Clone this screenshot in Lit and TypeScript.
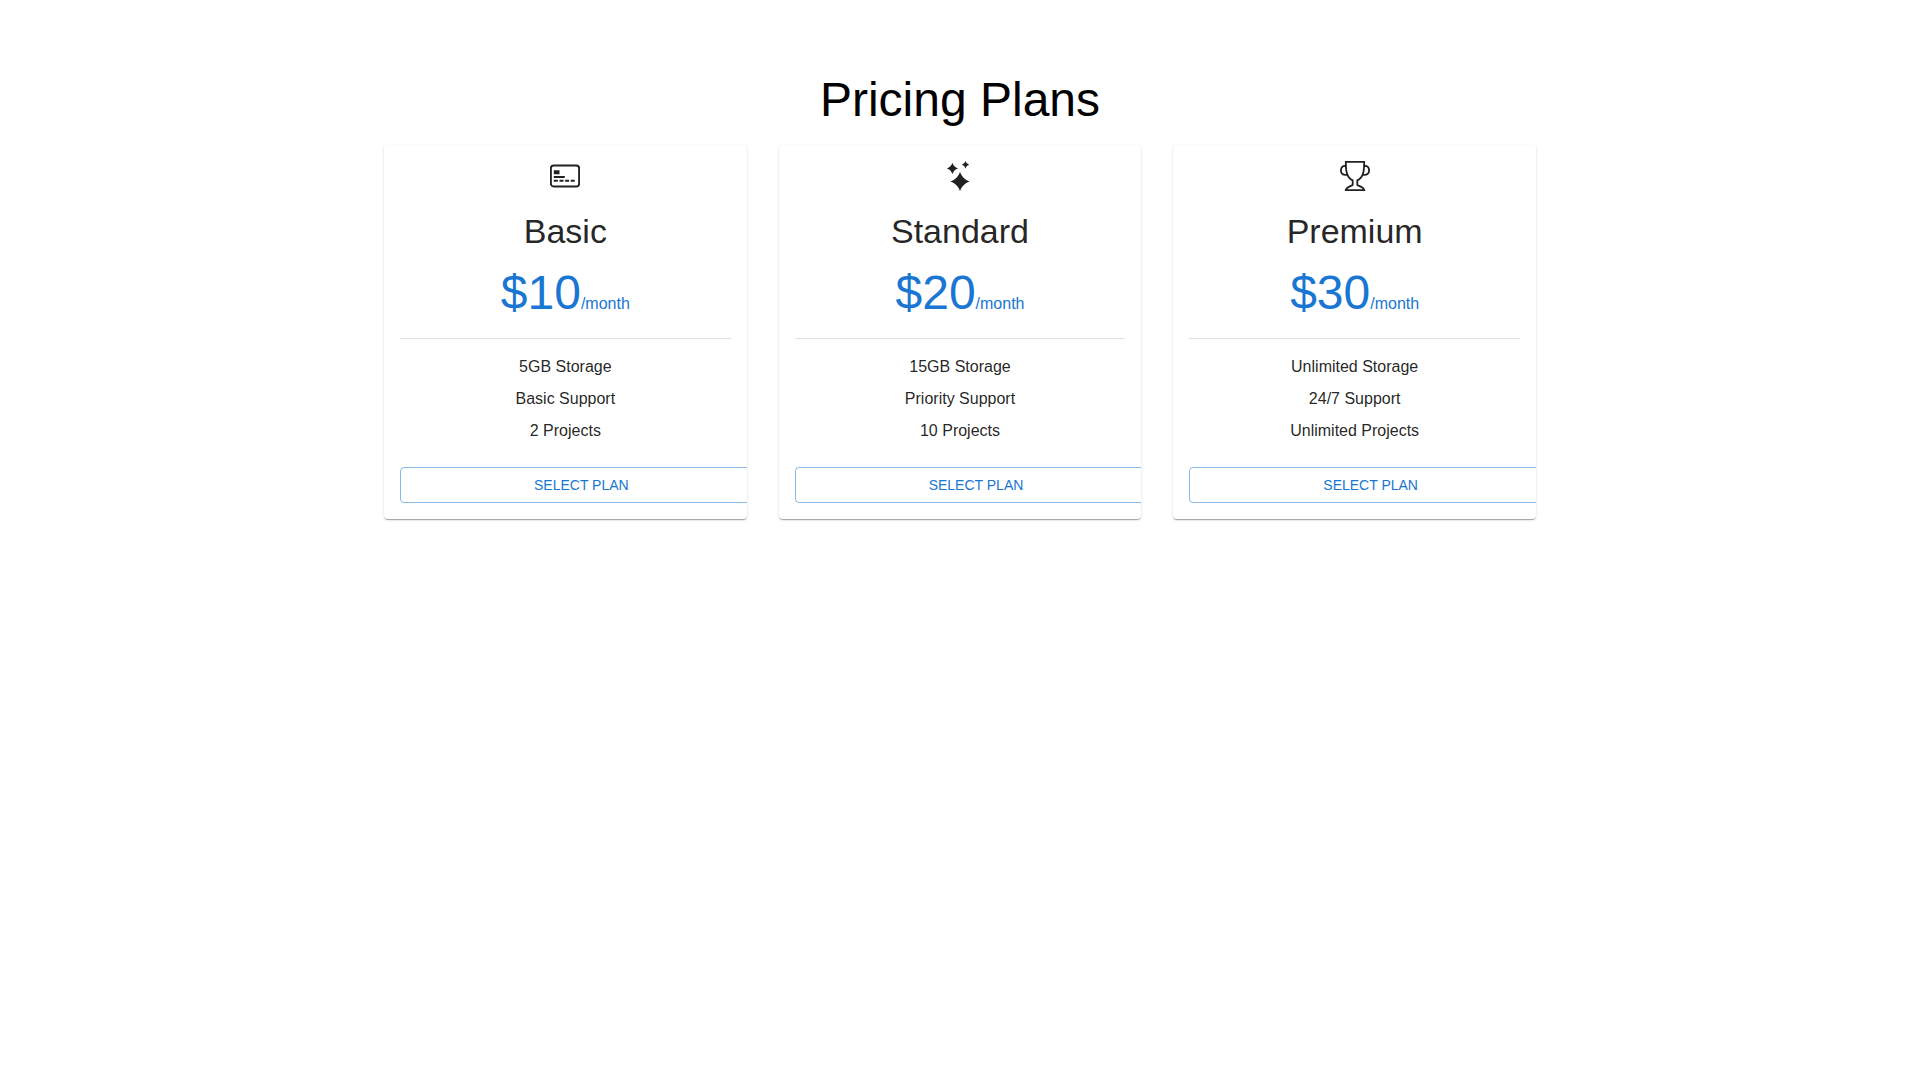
import { LitElement, html, css, svg, SVGTemplateResult } from "lit";
import { customElement, property } from "lit/decorators.js";

type IconName = "card" | "sparkles" | "trophy";

interface Plan {
  name: string;
  price: string;
  icon: IconName;
  features: string[];
}

const PLANS: Plan[] = [
  { name: "Basic", price: "$10", icon: "card", features: ["5GB Storage", "Basic Support", "2 Projects"] },
  { name: "Standard", price: "$20", icon: "sparkles", features: ["15GB Storage", "Priority Support", "10 Projects"] },
  { name: "Premium", price: "$30", icon: "trophy", features: ["Unlimited Storage", "24/7 Support", "Unlimited Projects"] },
];

const ICONS: Record<IconName, SVGTemplateResult> = {
  card: svg`
    <rect x="1.900" y="5.500" width="28.200" height="21" rx="2.800" fill="none" stroke="currentColor" stroke-width="1.900" />
    <path fill="currentColor" d="M4.800 10.300h5.700v4H4.800zM4.800 16h11v2h-11zM4.800 19.800h4v2h-4zM10.500 19.800h4v2h-4zM16.100 19.800h4v2h-4zM21.700 19.800h4v2h-4z" />`,
  sparkles: svg`
    <path fill="currentColor" d="M21.500 1Q22.200 4 25.200 4.700Q22.200 5.400 21.500 8.400Q20.800 5.400 17.800 4.700Q20.800 4 21.500 1z" />
    <path fill="currentColor" d="M8.400 2.800Q9.700 7.100 14 8.400Q9.700 9.700 8.400 14Q7.100 9.700 2.800 8.400Q7.100 7.100 8.400 2.800z" />
    <path fill="currentColor" d="M16 12.100Q18.500 19.100 25.500 21.600Q18.500 24.100 16 31.100Q13.500 24.100 6.500 21.600Q13.500 19.100 16 12.100z" />`,
  trophy: svg`
    <g fill="none" stroke="currentColor" stroke-width="1.800">
      <path d="M6.800 1.900h18.400c0 7-.3 15.700-6.900 18.500v4.300c1 1.600 5.900 1.800 6.900 5.400H6.800c1-3.600 5.900-3.800 6.900-5.400v-4.300c-6.600-2.800-6.900-11.500-6.900-18.500z" />
      <path d="M7 5.900C3.600 5.300 1.900 7.800 1.900 10.400c0 2.900 2.200 5.300 6 4.300M25 5.900c3.400-.6 5.100 1.900 5.100 4.500 0 2.900-2.200 5.300-6 4.300" />
    </g>`,
};

@customElement("plan-card")
export class PlanCard extends LitElement {
  @property({ attribute: false }) plan!: Plan;

  static styles = css`
    :host {
      display: block;
      min-width: 0;
    }
    .card {
      overflow: hidden;
      padding: 16px;
      border-radius: 4px;
      background: #fff;
      color: rgba(0, 0, 0, 0.87);
      text-align: center;
      box-shadow:
        0 2px 1px -1px rgba(0, 0, 0, 0.2),
        0 1px 1px 0 rgba(0, 0, 0, 0.14),
        0 1px 3px 0 rgba(0, 0, 0, 0.12);
    }
    .icon {
      display: block;
      width: 30px;
      height: 30px;
      margin: 0 auto 19px;
    }
    .name {
      margin: 0 0 13px;
      font-size: 34px;
      font-weight: 400;
      line-height: 42px;
    }
    .price {
      margin: 0;
      color: #1976d2;
      font-size: 48px;
      line-height: 56px;
    }
    .period {
      font-size: 16px;
      line-height: 24px;
    }
    .divider {
      height: 1px;
      margin: 17px 0 16px;
      border: 0;
      background: rgba(0, 0, 0, 0.12);
    }
    .features {
      display: grid;
      gap: 8px;
      margin: 0 0 24px;
      padding: 0;
      list-style: none;
      font-size: 16px;
      line-height: 24px;
    }
    /* The action runs past the card's padding and is clipped at its edge. */
    .actions {
      margin-right: -32px;
    }
    .select {
      display: block;
      width: 100%;
      padding: 5px 16px;
      border: 1px solid rgba(25, 118, 210, 0.5);
      border-radius: 4px;
      background: transparent;
      color: #1976d2;
      font-family: inherit;
      font-size: 14px;
      font-weight: 500;
      line-height: 24px;
      text-transform: uppercase;
      cursor: pointer;
    }
  `;

  render() {
    const { name, price, icon, features } = this.plan;
    return html`
      <article class="card">
        <svg class="icon" viewBox="1 1 30 30" aria-hidden="true">${ICONS[icon]}</svg>
        <h2 class="name">${name}</h2>
        <p class="price">${price}<span class="period">/month</span></p>
        <hr class="divider" />
        <ul class="features">
          ${features.map((feature) => html`<li>${feature}</li>`)}
        </ul>
        <div class="actions">
          <button class="select" type="button">Select Plan</button>
        </div>
      </article>
    `;
  }
}

@customElement("app-root")
export class AppRoot extends LitElement {
  static styles = css`
    :host {
      display: block;
      font-family: "Liberation Sans", Arial, sans-serif;
    }
    .container {
      box-sizing: border-box;
      max-width: 1200px;
      margin: 0 auto;
      padding: 72px 24px;
    }
    .title {
      margin: 0 0 17px;
      color: #000;
      font-size: 48px;
      font-weight: 400;
      line-height: 56px;
      text-align: center;
    }
    .plans {
      display: grid;
      grid-template-columns: repeat(3, minmax(0, 1fr));
      gap: 32px;
    }
    @media (max-width: 899px) {
      .plans {
        grid-template-columns: minmax(0, 1fr);
      }
    }
  `;

  render() {
    return html`
      <main class="container">
        <h1 class="title">Pricing Plans</h1>
        <section class="plans">
          ${PLANS.map((plan) => html`<plan-card .plan=${plan}></plan-card>`)}
        </section>
      </main>
    `;
  }
}
